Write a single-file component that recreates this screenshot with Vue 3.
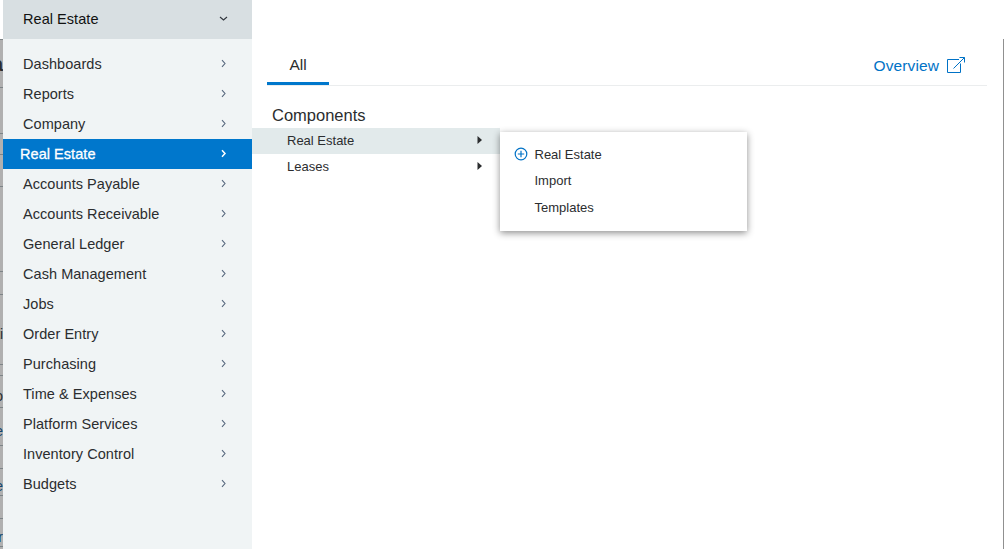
<script setup>
import { ref } from "vue";

const modules = [
	"Dashboards",
	"Reports",
	"Company",
	"Real Estate",
	"Accounts Payable",
	"Accounts Receivable",
	"General Ledger",
	"Cash Management",
	"Jobs",
	"Order Entry",
	"Purchasing",
	"Time & Expenses",
	"Platform Services",
	"Inventory Control",
	"Budgets",
];

const activeModule = ref("Real Estate");
const components = ["Real Estate", "Leases"];
const activeComponent = ref("Real Estate");
const actions = [
	{ label: "Real Estate", add: true },
	{ label: "Import" },
	{ label: "Templates" },
];

// Rows of the dimmed page that stay visible beside the menu
const rows = [
	{ height: 48, text: "a", type: "heading" },
	{ height: 46 },
	{ height: 21 },
	{ height: 32 },
	{ height: 85 },
	{ height: 23 },
	{ height: 70, text: "ti" },
	{ height: 11 },
	{ height: 32, text: "o" },
	{ height: 38, text: "e", type: "link" },
	{ height: 23 },
	{ height: 27, text: "e", type: "link" },
	{ height: 23 },
	{ height: 28, text: "r", type: "link" },
	{ height: 3 },
];
</script>

<template>
	<div class="page">
		<div class="backdrop">
			<div
				v-for="(row, i) in rows"
				:key="i"
				class="backdrop-row"
				:class="row.type"
				:style="{ height: row.height + 'px' }"
			>
				<span v-if="row.text">{{ row.text }}</span>
			</div>
		</div>

		<nav class="sidebar">
			<div class="sidebar-header">
				<span>{{ activeModule }}</span>
				<svg class="chevron" viewBox="0 0 9 9">
					<path d="M1 3l3.5 3L8 3" />
				</svg>
			</div>
			<ul class="module-list">
				<li
					v-for="name in modules"
					:key="name"
					class="module"
					:class="{ active: name === activeModule }"
				>
					<span>{{ name }}</span>
					<svg class="chevron" viewBox="0 0 9 9">
						<path d="M3 1.2l3 3.3-3 3.3" />
					</svg>
				</li>
			</ul>
		</nav>

		<main class="panel">
			<div class="tabs">
				<div class="tab">All</div>
				<a class="overview">
					Overview
					<svg viewBox="0 0 20 18">
						<path d="M13 3.5H1.5v13h13V7.5" />
						<path d="M7.5 12.5L18.5 1.5M13.5 1.5h5v5" />
					</svg>
				</a>
			</div>

			<h2 class="title">Components</h2>
			<ul class="component-list">
				<li
					v-for="name in components"
					:key="name"
					class="component"
					:class="{ active: name === activeComponent }"
				>
					<span>{{ name }}</span>
					<svg viewBox="0 0 5 8">
						<path d="M0.5 0v8L5 4z" />
					</svg>
					<div v-if="name === activeComponent" class="flyout">
						<div v-for="action in actions" :key="action.label" class="action">
							<span class="action-icon">
								<svg v-if="action.add" viewBox="0 0 14 14">
									<circle cx="7" cy="7" r="5.8" />
									<path d="M7 3.8v6.4M3.8 7h6.4" />
								</svg>
							</span>
							{{ action.label }}
						</div>
					</div>
				</li>
			</ul>
		</main>
	</div>
</template>

<style>
body {
	background: #fff;
}
</style>

<style scoped>
.page {
	display: flex;
	width: 1004px;
	height: 549px;
	overflow: hidden;
	background: #fff;
	color: #2b2d2f;
	font-family: "Liberation Sans", Arial, sans-serif;
}

ul {
	margin: 0;
	padding: 0;
	list-style: none;
}

svg {
	fill: none;
	stroke: currentColor;
}

/* Dimmed page */
.backdrop {
	flex: none;
	width: 3px;
	padding-top: 39px;
	overflow: hidden;
}

.backdrop-row {
	display: flex;
	align-items: center;
	justify-content: flex-end;
	box-sizing: border-box;
	padding-top: 8px;
	border-top: 1px solid #7d8487;
	background: #b0b0b0;
	font-size: 14px;
}

.backdrop-row:last-child {
	padding-top: 0;
}

.backdrop-row.heading {
	padding-top: 2px;
	font-size: 20px;
	font-weight: 700;
}

.backdrop-row.link {
	color: #14446c;
}

/* Sidebar */
.sidebar {
	position: relative;
	flex: none;
	width: 249px;
	background: #f0f4f5;
	font-size: 14.5px;
	letter-spacing: 0.05px;
}

.sidebar-header,
.module {
	display: flex;
	align-items: center;
	justify-content: space-between;
	box-sizing: border-box;
	padding: 0 24px 0 20px;
}

.sidebar-header {
	height: 39px;
	padding-bottom: 2px;
	background: #d8dfe2;
	color: #111;
}

.module-list {
	padding-top: 10px;
}

.module {
	height: 30px;
}

.module.active {
	padding-left: 17px;
	background: #0077cc;
	color: #fff;
	-webkit-text-stroke: 0.3px #fff;
}

.chevron {
	width: 9px;
	height: 9px;
	margin-bottom: 2px;
	color: #56677d;
	stroke-width: 1.1;
}

.sidebar-header .chevron {
	margin-bottom: 0;
	color: #30363d;
}

.active .chevron {
	color: #fff;
	stroke-width: 1.5;
}

/* Panel */
.panel {
	flex: 1;
	box-sizing: border-box;
	margin-top: 39px;
	border-right: 1px solid #909090;
}

.tabs {
	display: flex;
	justify-content: space-between;
	box-sizing: border-box;
	height: 47px;
	margin: 0 16px 0 15px;
	border-bottom: 1px solid #ebedee;
}

.tab {
	box-sizing: border-box;
	width: 62px;
	height: 46px;
	padding-top: 17px;
	border-bottom: 3px solid #0077cc;
	font-size: 15.5px;
	line-height: 18px;
	text-align: center;
}

.overview {
	display: flex;
	align-items: center;
	gap: 7px;
	height: 53px;
	margin-right: 21px;
	color: #0072c6;
	font-size: 15.5px;
	letter-spacing: 0.1px;
}

.overview svg {
	width: 20px;
	height: 18px;
	margin-bottom: 2px;
}

.title {
	margin: 20px 0 3px 20px;
	font-size: 16.5px;
	font-weight: 400;
	line-height: 19px;
}

.component {
	position: relative;
	display: flex;
	align-items: center;
	justify-content: space-between;
	box-sizing: border-box;
	width: 248px;
	height: 26px;
	padding: 0 18px 2px 35px;
	font-size: 13px;
}

.component.active {
	background: #e2eaeb;
}

.component > svg {
	width: 5px;
	height: 8px;
	fill: currentColor;
	stroke: none;
}

.flyout {
	position: absolute;
	top: 4px;
	left: 248px;
	box-sizing: border-box;
	width: 247px;
	height: 99px;
	padding: 9px 14px;
	background: #fff;
	box-shadow: 0 2px 7px rgba(0, 0, 0, 0.45);
}

.action {
	display: flex;
	align-items: center;
	height: 26.5px;
}

.action-icon {
	display: flex;
	width: 20.5px;
	color: #0072c6;
}

.action-icon svg {
	width: 14px;
	height: 14px;
	stroke-width: 1.2;
}
</style>
